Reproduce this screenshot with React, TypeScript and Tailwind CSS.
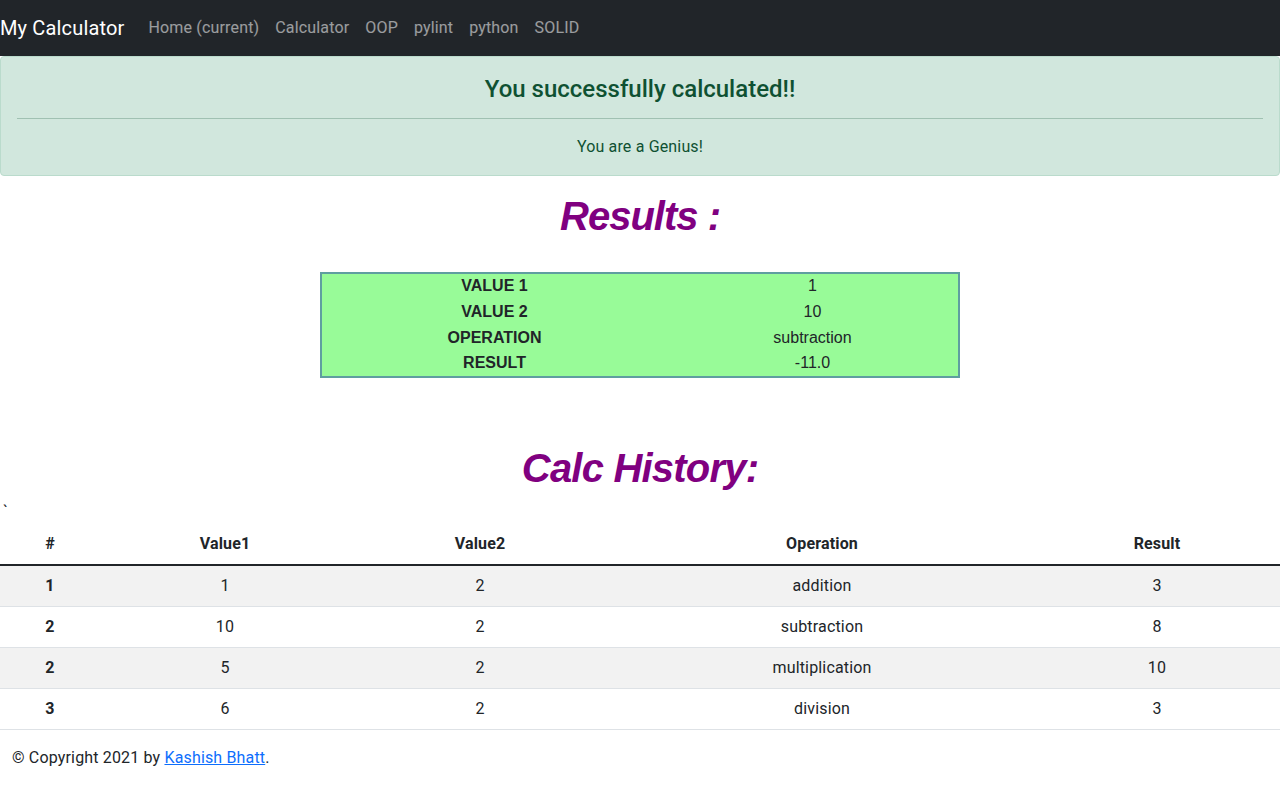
const navLinks = ["Home (current)", "Calculator", "OOP", "pylint", "python", "SOLID"];

const summary = [
  ["VALUE 1", "1"],
  ["VALUE 2", "10"],
  ["OPERATION", "subtraction"],
  ["RESULT", "-11.0"],
];

const history = [
  ["1", "1", "2", "addition", "3"],
  ["2", "10", "2", "subtraction", "8"],
  ["2", "5", "2", "multiplication", "10"],
  ["3", "6", "2", "division", "3"],
];

export default function App() {
  return (
    <div className="min-h-[800px] bg-white text-[#212529] font-['Roboto','Liberation_Sans',sans-serif] text-base tracking-[0.01em]">
      <nav className="flex h-14 items-center bg-[#212529]">
        <span className="mr-4 text-xl text-white">My Calculator</span>
        <ul className="flex">
          {navLinks.map((l) => (
            <li key={l} className="px-2 text-white/55">
              {l}
            </li>
          ))}
        </ul>
      </nav>

      <div className="mb-4 rounded border border-[#badbcc] bg-[#d1e7dd] p-4 text-center text-[#0f5132]">
        <h4 className="pt-[2px] text-2xl leading-[1.2] font-medium tracking-normal">You successfully calculated!!</h4>
        <hr className="mt-[14px] mb-4 border-t border-[#0f5132] opacity-25" />
        <p className="leading-6">You are a Genius!</p>
      </div>

      <h1 className="mb-2 text-center font-['Liberation_Sans',Arial,sans-serif] text-[40px] leading-[1.2] font-bold italic tracking-[-0.025em] text-[#800080]">
        Results :
      </h1>

      <table className="mx-auto mt-[32px] w-[640px] border-2 border-[#5f9ea0] bg-[#98fb98] font-['Liberation_Sans',Arial,sans-serif] tracking-normal">
        <tbody>
          {summary.map(([k, v]) => (
            <tr key={k} className="h-[26px]">
              <th className="w-[346px] text-center font-bold">{k}</th>
              <td className="text-center">{v}</td>
            </tr>
          ))}
        </tbody>
      </table>

      <h1 className="mt-[66px] mb-2 text-center font-['Liberation_Sans',Arial,sans-serif] text-[40px] leading-[1.2] font-bold italic tracking-[-0.02em] text-[#800080]">
        Calc History:
      </h1>
      <p className="pl-[3px] leading-6">`</p>

      <table className="mb-4 w-full border-collapse text-center">
        <thead>
          <tr className="border-b-2 border-[#212529]">
            <th className="w-[100px] p-2 font-bold">#</th>
            <th className="w-[250px] p-2 font-bold">Value1</th>
            <th className="w-[260px] p-2 font-bold">Value2</th>
            <th className="w-[424px] p-2 font-bold">Operation</th>
            <th className="p-2 font-bold">Result</th>
          </tr>
        </thead>
        <tbody>
          {history.map((r, i) => (
            <tr key={i} className={`border-b border-[#dee2e6] ${i % 2 === 0 ? "bg-[#f2f2f2]" : "bg-white"}`}>
              <th className="p-2 font-bold">{r[0]}</th>
              <td className="p-2">{r[1]}</td>
              <td className="p-2">{r[2]}</td>
              <td className="p-2">{r[3]}</td>
              <td className="p-2">{r[4]}</td>
            </tr>
          ))}
        </tbody>
      </table>

      <footer className="px-3 leading-6">
        © Copyright 2021 by{" "}
        <a href="#" className="text-[#0d6efd] underline">
          Kashish Bhatt
        </a>
        .
      </footer>
    </div>
  );
}
